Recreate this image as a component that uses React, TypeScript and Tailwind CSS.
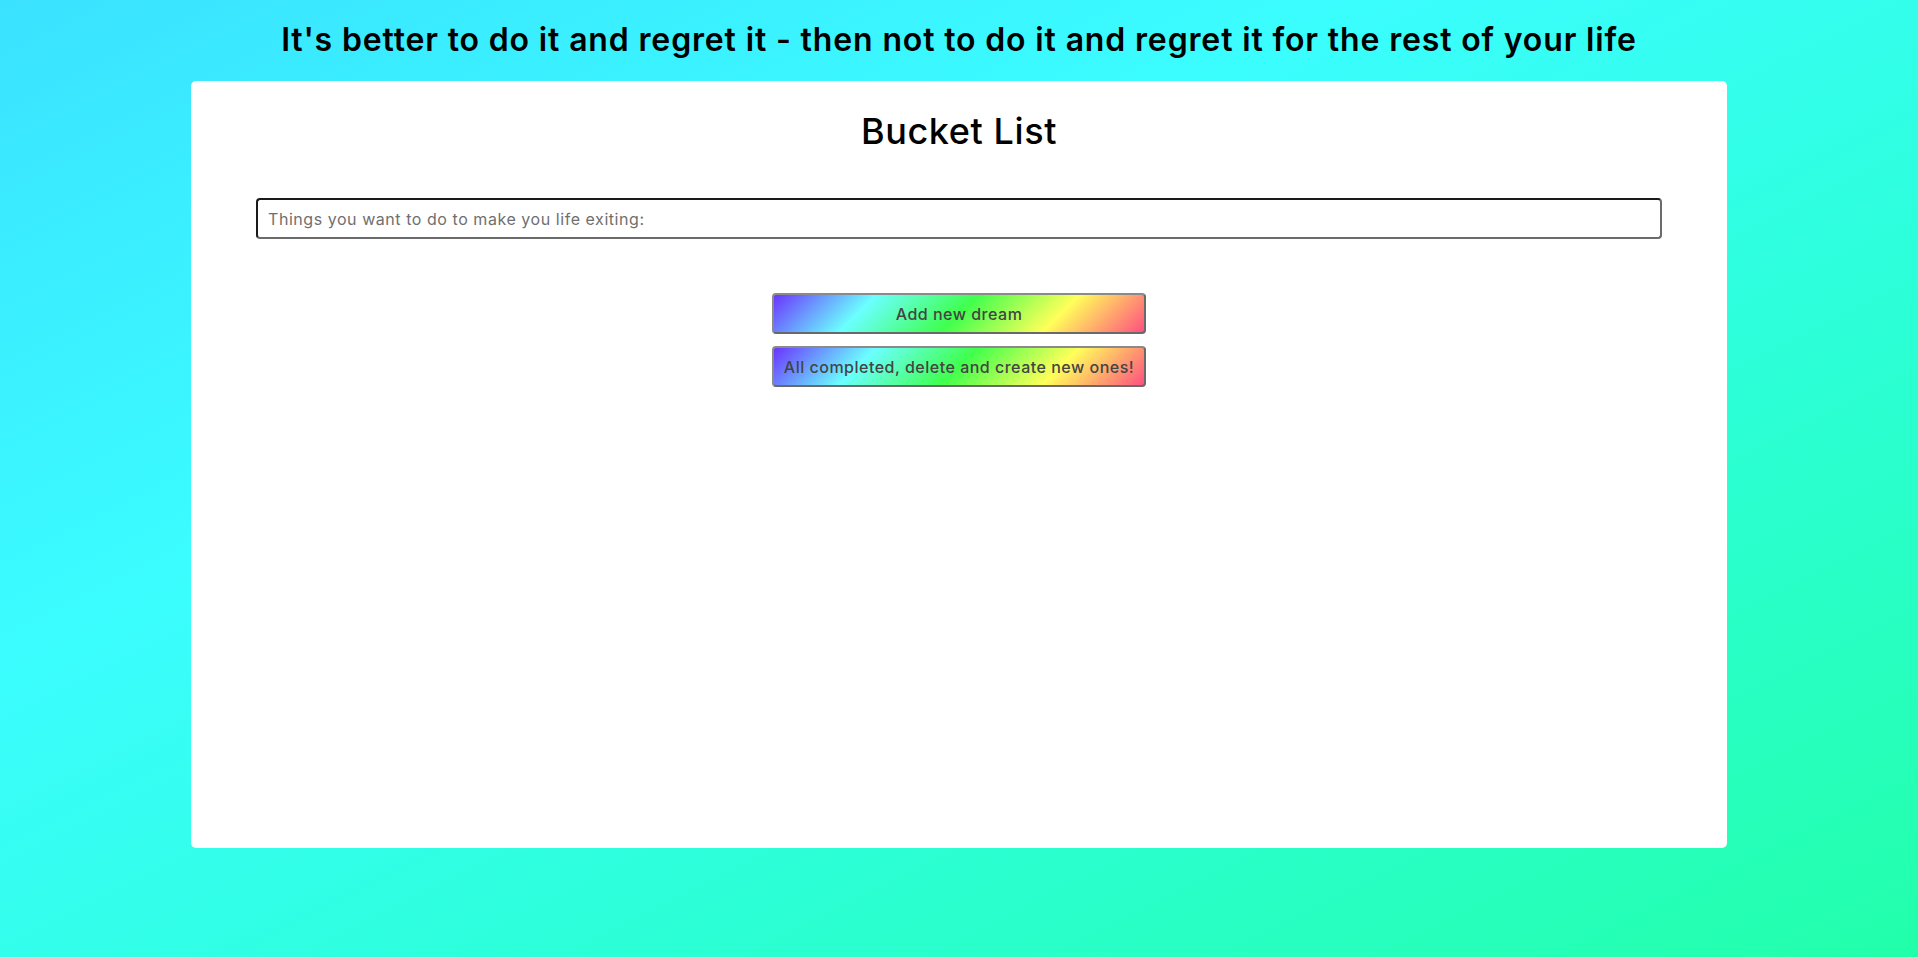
export default function App() {
  return (
    <div
      className="min-h-screen w-full pt-[20px] pb-[60px] bg-[linear-gradient(to_bottom_right,#3ae2ff_0%,#3bfdff_35%,#2dffdc_62%,#22ffaa_100%)]"
      style={{ fontFamily: "Inter, 'Noto Sans', sans-serif" }}
    >
      <h1 className="text-center text-[32px] leading-[39px] font-semibold text-black tracking-[0.85px] mb-[22px]">
        It's better to do it and regret it - then not to do it and regret it for the rest of your life
      </h1>

      <div className="mx-auto w-[1536px] h-[767px] bg-white rounded-[5px] pt-[28px]">
        <h2 className="text-center text-[36px] leading-[44px] font-medium text-black tracking-[0.6px]">
          Bucket List
        </h2>

        <div className="mt-[45px] flex justify-center">
          <input
            type="text"
            placeholder="Things you want to do to make you life exiting:"
            className="w-[1406px] h-[41px] rounded-[4px] border-2 border-t-[#1a1a1a] border-l-[#1a1a1a] border-b-[#6b6b6b] border-r-[#6b6b6b] px-[10px] text-[16px] tracking-[0.55px] text-black placeholder:text-[#6f6f6f] outline-none bg-white"
          />
        </div>

        <div className="mt-[54px] flex flex-col items-center gap-3">
          <button className="w-[374px] h-[41px] rounded-[4px] border-2 border-t-[#8a8a8a] border-l-[#8a8a8a] border-b-[#696969] border-r-[#696969] bg-[linear-gradient(135deg,#6a35ff_0%,#6bffff_25%,#40ff4d_50%,#ffff5a_75%,#ff5080_100%)] text-[16px] font-medium text-[#444] tracking-[0.5px]">
            Add new dream
          </button>
          <button className="w-[374px] h-[41px] rounded-[4px] border-2 border-t-[#8a8a8a] border-l-[#8a8a8a] border-b-[#696969] border-r-[#696969] bg-[linear-gradient(135deg,#6a35ff_0%,#6bffff_25%,#40ff4d_50%,#ffff5a_75%,#ff5080_100%)] text-[16px] font-medium text-[#444] tracking-[0.5px]">
            All completed, delete and create new ones!
          </button>
        </div>
      </div>
    </div>
  );
}
